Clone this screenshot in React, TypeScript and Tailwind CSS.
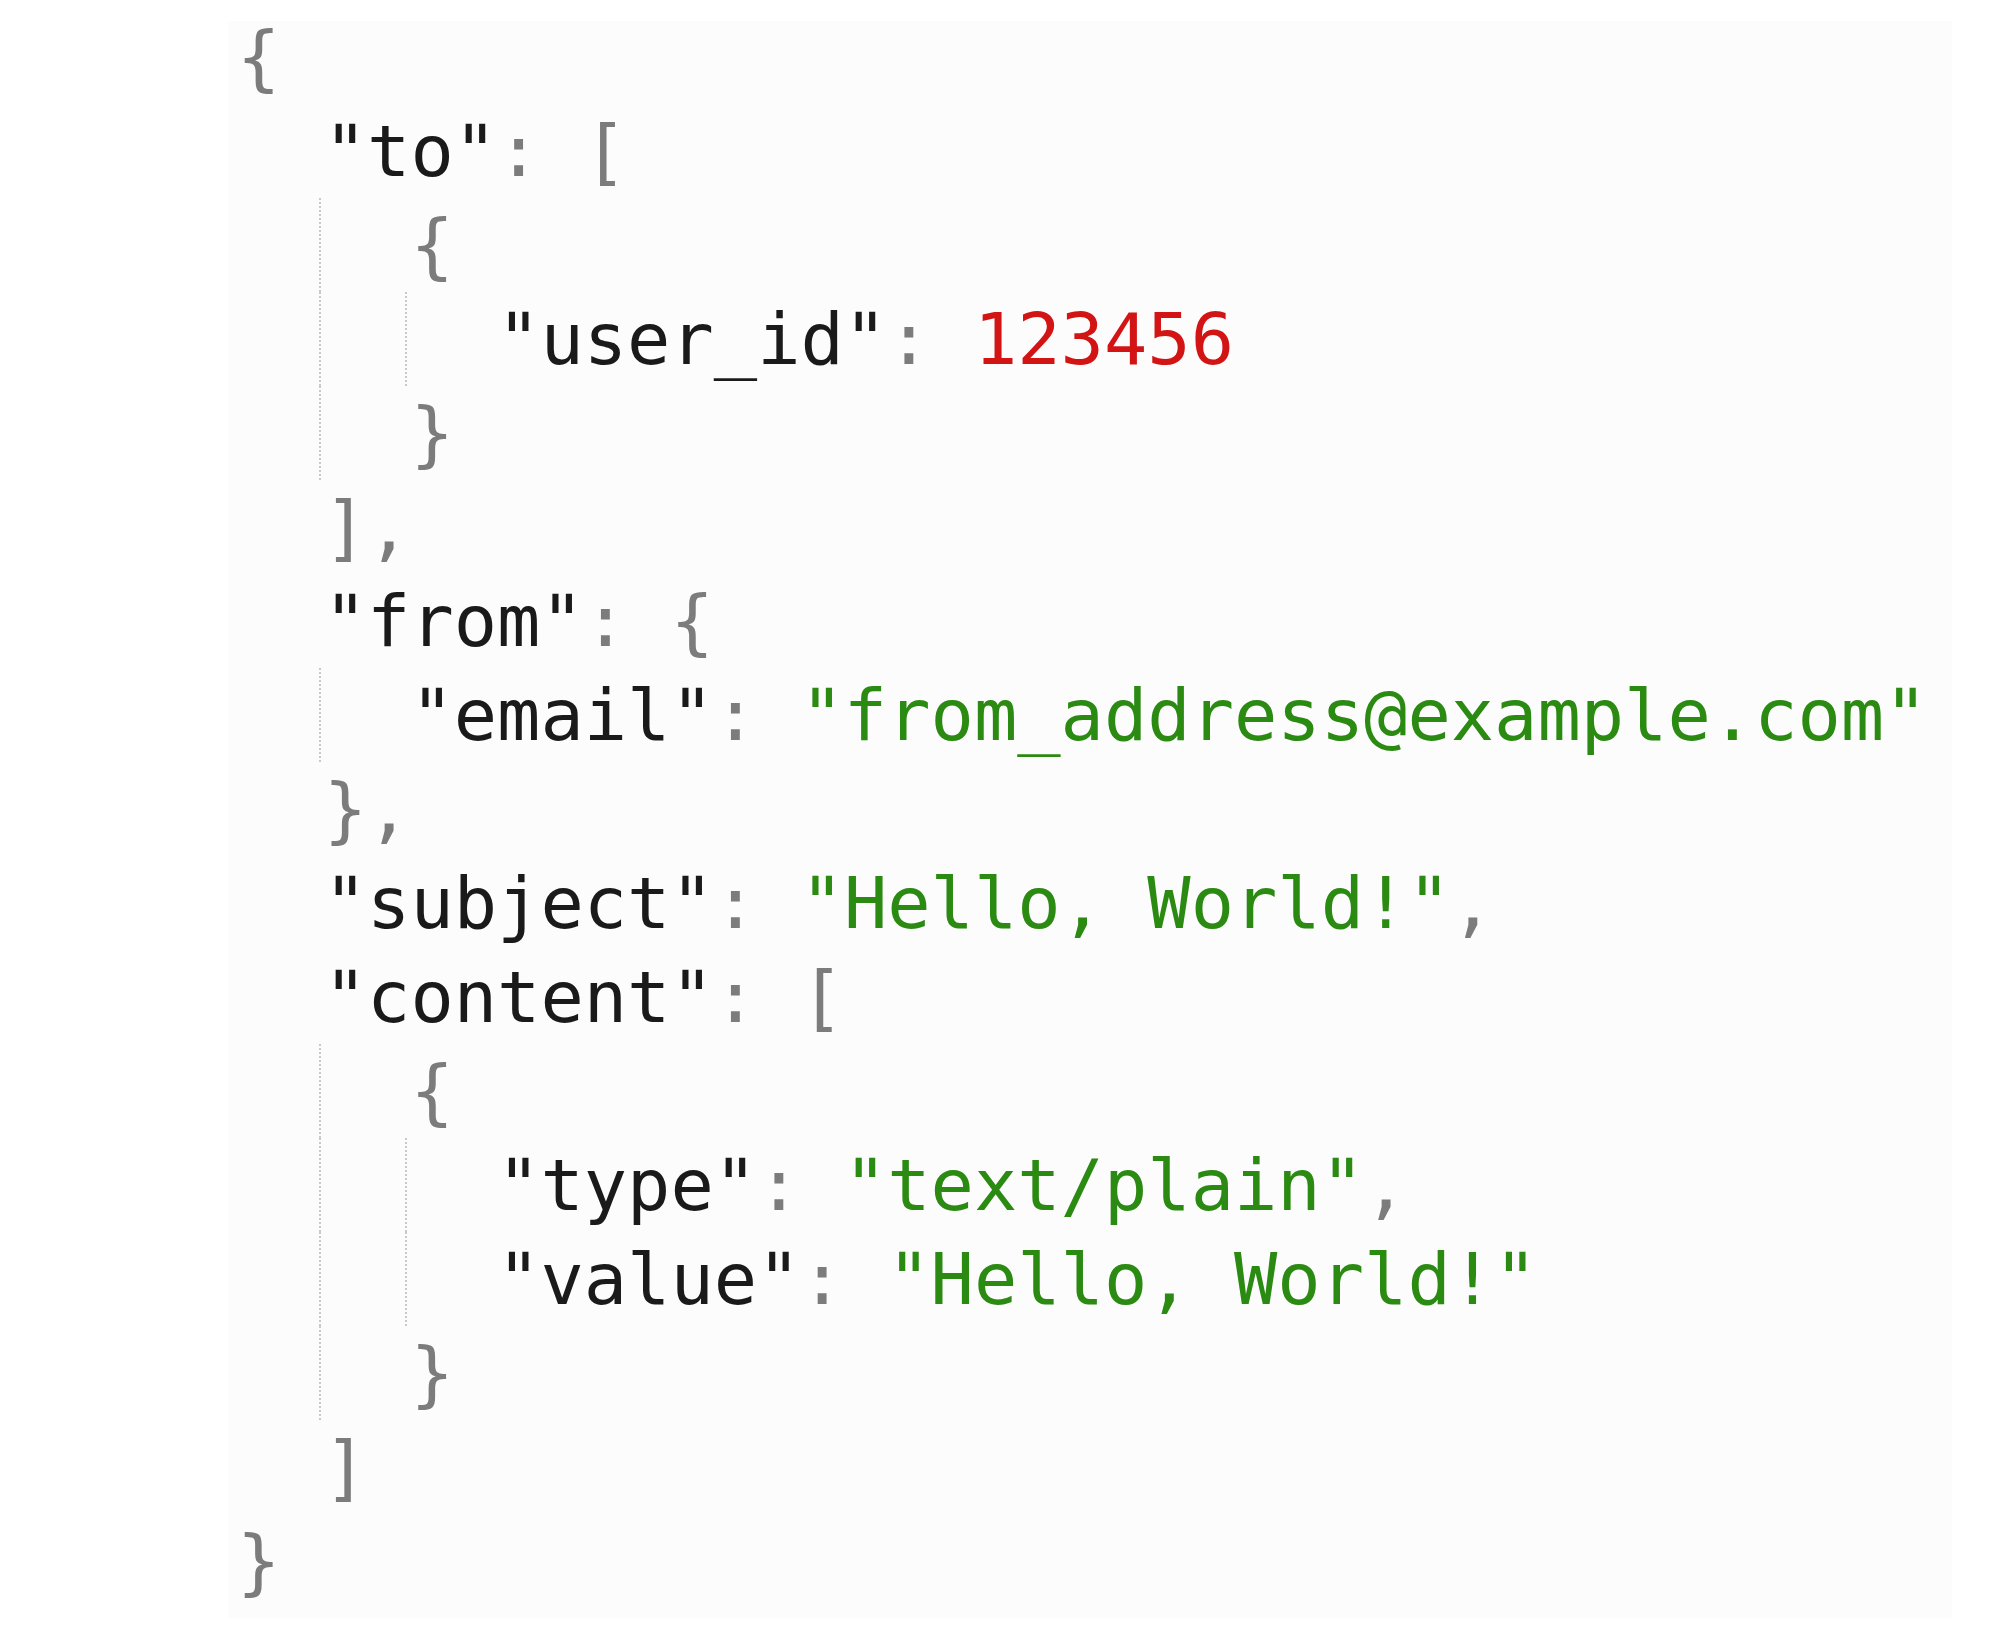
import React from "react";

type Tok = { t: string; c: "k" | "p" | "s" | "n" };

const color: Record<Tok["c"], string> = {
  k: "text-[#1a1a1a]",
  p: "text-[#7c7c7c]",
  s: "text-[#2b8a12]",
  n: "text-[#d21414]",
};

type LineDef = { indent: number; guides: number[]; toks: Tok[] };

const k = (t: string): Tok => ({ t, c: "k" });
const p = (t: string): Tok => ({ t, c: "p" });
const s = (t: string): Tok => ({ t, c: "s" });
const n = (t: string): Tok => ({ t, c: "n" });

const lines: LineDef[] = [
  { indent: 0, guides: [], toks: [p("{")] },
  { indent: 1, guides: [], toks: [k('"to"'), p(": [")] },
  { indent: 2, guides: [1], toks: [p("{")] },
  { indent: 3, guides: [1, 2], toks: [k('"user_id"'), p(": "), n("123456")] },
  { indent: 2, guides: [1], toks: [p("}")] },
  { indent: 1, guides: [], toks: [p("],")] },
  { indent: 1, guides: [], toks: [k('"from"'), p(": {")] },
  { indent: 2, guides: [1], toks: [k('"email"'), p(": "), s('"from_address@example.com"')] },
  { indent: 1, guides: [], toks: [p("},")] },
  { indent: 1, guides: [], toks: [k('"subject"'), p(": "), s('"Hello, World!"'), p(",")] },
  { indent: 1, guides: [], toks: [k('"content"'), p(": [")] },
  { indent: 2, guides: [1], toks: [p("{")] },
  { indent: 3, guides: [1, 2], toks: [k('"type"'), p(": "), s('"text/plain"'), p(",")] },
  { indent: 3, guides: [1, 2], toks: [k('"value"'), p(": "), s('"Hello, World!"')] },
  { indent: 2, guides: [1], toks: [p("}")] },
  { indent: 1, guides: [], toks: [p("]")] },
  { indent: 0, guides: [], toks: [p("}")] },
];

function Line({ def }: { def: LineDef }) {
  const spans = [];
  for (let i = 0; i < def.indent; i++) {
    const g = def.guides.includes(i);
    spans.push(
      <span
        key={i}
        className={
          g
            ? "-ml-[5px] inline-block h-full w-[calc(2ch+5px)] shrink-0 border-l-2 border-dotted border-[#c9c9c9]"
            : "inline-block h-full w-[2ch] shrink-0"
        }
      />
    );
  }
  return (
    <div className="flex h-[94px] items-stretch whitespace-pre">
      {spans}
      <span className="leading-[94px]">
        {def.toks.map((tk, i) => (
          <span key={i} className={color[tk.c]}>
            {tk.t}
          </span>
        ))}
      </span>
    </div>
  );
}

export default function App() {
  return (
    <div className="min-h-[1637px] w-[2000px] bg-white pt-[21px] pl-[228px]">
      <div
        className="flow-root h-[1597px] w-[1724px] bg-[#fcfcfc] pl-[9px] text-[72px] leading-[94px]"
        style={{ fontFamily: '"DejaVu Sans Mono", monospace' }}
      >
        <div className="-mt-[11px]">
          {lines.map((l, i) => (
            <Line key={i} def={l} />
          ))}
        </div>
      </div>
    </div>
  );
}
